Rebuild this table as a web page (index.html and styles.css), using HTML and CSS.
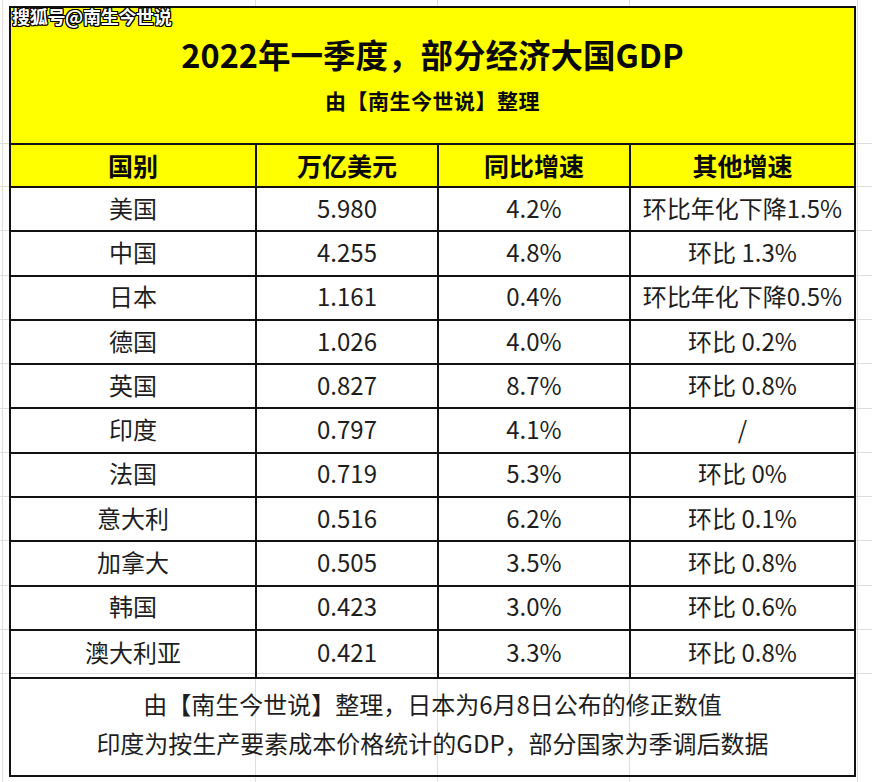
FILE: index.html
```html
<!DOCTYPE html>
<html lang="zh-CN">
<head>
<meta charset="utf-8">
<title>2022年一季度，部分经济大国GDP</title>
<link rel="stylesheet" href="styles.css">
</head>
<body>
<div class="sheet">
  <div class="watermark">搜狐号@南生今世说</div>
  <table class="gdp">
    <colgroup>
      <col class="c1"><col class="c2"><col class="c3"><col class="c4">
    </colgroup>
    <tbody>
      <tr class="title-row">
        <td colspan="4">
          <div class="title">2022年一季度，部分经济大国GDP</div>
          <div class="subtitle">由【南生今世说】整理</div>
        </td>
      </tr>
      <tr class="head-row">
        <th>国别</th><th>万亿美元</th><th>同比增速</th><th>其他增速</th>
      </tr>
      <tr class="data-row"><td>美国</td><td>5.980</td><td>4.2%</td><td>环比年化下降1.5%</td></tr>
      <tr class="data-row"><td>中国</td><td>4.255</td><td>4.8%</td><td>环比 1.3%</td></tr>
      <tr class="data-row"><td>日本</td><td>1.161</td><td>0.4%</td><td>环比年化下降0.5%</td></tr>
      <tr class="data-row"><td>德国</td><td>1.026</td><td>4.0%</td><td>环比 0.2%</td></tr>
      <tr class="data-row"><td>英国</td><td>0.827</td><td>8.7%</td><td>环比 0.8%</td></tr>
      <tr class="data-row"><td>印度</td><td>0.797</td><td>4.1%</td><td>/</td></tr>
      <tr class="data-row"><td>法国</td><td>0.719</td><td>5.3%</td><td>环比 0%</td></tr>
      <tr class="data-row"><td>意大利</td><td>0.516</td><td>6.2%</td><td>环比 0.1%</td></tr>
      <tr class="data-row"><td>加拿大</td><td>0.505</td><td>3.5%</td><td>环比 0.8%</td></tr>
      <tr class="data-row"><td>韩国</td><td>0.423</td><td>3.0%</td><td>环比 0.6%</td></tr>
      <tr class="data-row last"><td>澳大利亚</td><td>0.421</td><td>3.3%</td><td>环比 0.8%</td></tr>
      <tr class="foot-row">
        <td colspan="4">
          <div class="note">由【南生今世说】整理，日本为6月8日公布的修正数值</div>
          <div class="note">印度为按生产要素成本价格统计的GDP，部分国家为季调后数据</div>
        </td>
      </tr>
    </tbody>
  </table>
</div>
</body>
</html>
```
FILE: styles.css
```css
* { box-sizing: border-box; }

html, body { margin: 0; padding: 0; }

body {
  font-family: "Noto Sans CJK SC", "Noto Sans", sans-serif;
  color: #1c1c1c;
  background-color: #ffffff;
  background-image:
    linear-gradient(#dedede, #dedede),
    linear-gradient(#dedede, #dedede),
    linear-gradient(#dedede, #dedede),
    linear-gradient(#dedede, #dedede),
    linear-gradient(#dedede, #dedede),
    linear-gradient(#dedede, #dedede),
    repeating-linear-gradient(to bottom, #dedede 0 1px, transparent 1px 44.3px);
  background-size: 1px 100%, 1px 100%, 1px 100%, 1px 100%, 1px 100%, 100% 1px, 100% 500px;
  background-position: 2px 0, 255px 0, 437px 0, 629px 0, 857px 0, 0 143px, 0 186px;
  background-repeat: no-repeat;
  min-height: 782px;
}

.sheet {
  position: relative;
  padding: 6px 0 0 9px;
}

.watermark {
  position: absolute;
  left: 12px;
  top: 4px;
  font-size: 18px;
  font-weight: 700;
  line-height: 24px;
  color: #ffffff;
  letter-spacing: -0.3px;
  text-shadow:
    -1px -1px 0 #000, 1px -1px 0 #000, -1px 1px 0 #000, 1px 1px 0 #000,
    0 -1px 0 #000, 0 1px 0 #000, -1px 0 0 #000, 1px 0 0 #000;
  z-index: 2;
}

.gdp {
  border-collapse: collapse;
  table-layout: fixed;
  width: 845px;
  border: 2px solid #121212;
}

.c1 { width: 246px; }
.c2 { width: 182px; }
.c3 { width: 192px; }
.c4 { width: 225px; }

.gdp td,
.gdp th {
  border: 2px solid #121212;
  padding: 0;
  text-align: center;
  vertical-align: middle;
}

.title-row td {
  height: 137px;
  background: #ffff00;
  vertical-align: top;
  padding-top: 25px;
}

.title {
  font-size: 32.5px;
  font-weight: 700;
  line-height: 42px;
  color: #0a0a0a;
}

.subtitle {
  margin-top: 11px;
  font-size: 21px;
  font-weight: 700;
  line-height: 28px;
  color: #0a0a0a;
  letter-spacing: 0.5px;
}

.head-row th {
  height: 43px;
  background: #ffff00;
  font-size: 25px;
  font-weight: 700;
  color: #0a0a0a;
  line-height: 30px;
  padding-bottom: 2px;
}

.data-row td {
  height: 44.3px;
  font-size: 24px;
  font-weight: 400;
  line-height: 30px;
  color: #1e1e1e;
  padding-bottom: 3px;
}

.data-row.last td { height: 48px; }

.foot-row td {
  height: 98px;
  padding-bottom: 8px;
}

.note {
  font-size: 24px;
  line-height: 39px;
  color: #1e1e1e;
}
```
